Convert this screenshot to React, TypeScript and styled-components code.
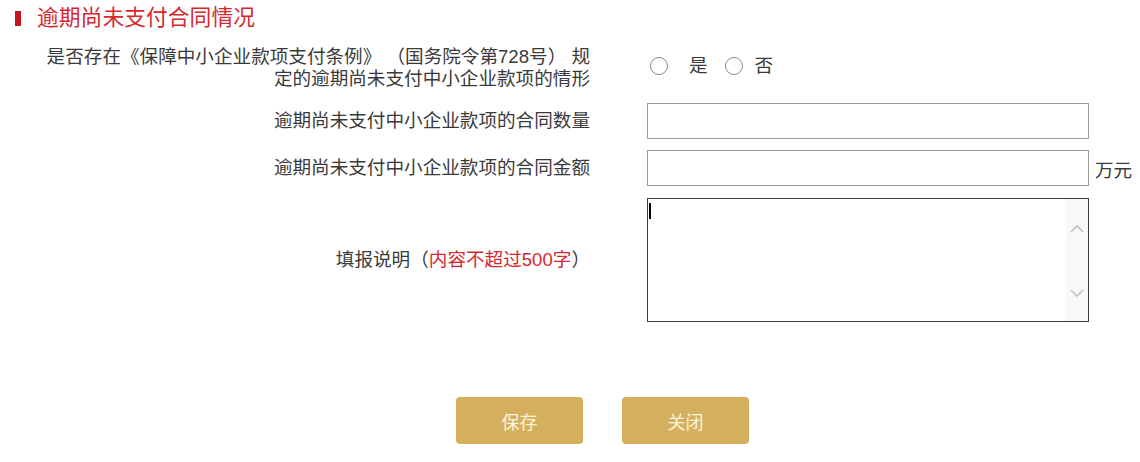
import React from "react";
import styled, { createGlobalStyle } from "styled-components";

const FONT = `"Liberation Sans", "Noto Sans CJK SC", "Microsoft YaHei", sans-serif`;

const Global = createGlobalStyle`
  html, body { margin: 0; padding: 0; background: #fff; }
  body { font-family: ${FONT}; color: #3a3a3a; }
`;

const Page = styled.div`
  width: 1140px;
  height: 462px;
  background: #fff;
  padding-top: 6px;
  box-sizing: border-box;
`;

const TitleRow = styled.div`
  display: flex;
  align-items: center;
  height: 24px;
  padding-left: 15px;
  gap: 16px;
`;

const TitleBar = styled.span`
  width: 6px;
  height: 15px;
  background: #c4161c;
`;

const TitleText = styled.h2`
  margin: 0;
  font-family: ${FONT};
  font-size: 21.8px;
  font-weight: 400;
  line-height: 24px;
  color: #d6282e;
`;

const Form = styled.div`
  display: flex;
  flex-direction: column;
  margin-top: 16px;
`;

const Row = styled.div<{ $top?: number }>`
  display: flex;
  align-items: center;
  margin-top: ${(p) => p.$top ?? 0}px;
`;

const Label = styled.div`
  width: 590px;
  text-align: right;
  font-size: 18.6px;
  line-height: 21.5px;
  color: #3a3a3a;
  flex-shrink: 0;
  white-space: pre;
`;

const Red = styled.span`
  color: #d6282e;
`;

const Control = styled.div`
  margin-left: 57px;
  width: 442px;
  flex-shrink: 0;
`;

const RadioGroup = styled.div`
  display: flex;
  align-items: center;
  padding-left: 3px;
  font-size: 18.6px;
  color: #3a3a3a;
  line-height: 21px;
  margin-top: -4px;
`;

const RadioCircle = styled.span<{ $gap: number }>`
  display: inline-block;
  width: 16px;
  height: 16px;
  border: 1px solid #8a8a8a;
  border-radius: 50%;
  background: #fff;
  margin-right: ${(p) => p.$gap}px;
`;

const RadioText = styled.span<{ $gap: number }>`
  margin-right: ${(p) => p.$gap}px;
`;

const TextInput = styled.div`
  width: 442px;
  height: 36px;
  box-sizing: border-box;
  border: 1px solid #9c9c9c;
  background: #fff;
`;

const Suffix = styled.span`
  margin-left: 6px;
  font-size: 18.6px;
  color: #3a3a3a;
`;

const AreaWrap = styled.div`
  position: relative;
  width: 442px;
  height: 124px;
  box-sizing: border-box;
  border: 1px solid #3c3c3c;
  background: #fff;
`;

const Caret = styled.span`
  position: absolute;
  left: 1px;
  top: 4px;
  width: 2px;
  height: 16px;
  background: #000;
`;

const ScrollBar = styled.div`
  position: absolute;
  right: 0;
  top: 0;
  bottom: 0;
  width: 22px;
  background: #f8f8f8;
  display: flex;
  flex-direction: column;
  justify-content: space-between;
  align-items: center;
  padding: 25px 0 23px;
  box-sizing: border-box;
`;

const ButtonBar = styled.div`
  display: flex;
  gap: 39px;
  padding-left: 456px;
  margin-top: 75px;
`;

const Button = styled.button`
  width: 127px;
  height: 47px;
  border: none;
  border-radius: 4px;
  background: #d4b05e;
  color: #fdf4d8;
  font-family: ${FONT};
  font-size: 18px;
  cursor: pointer;
`;

const Chevron = ({ up }: { up?: boolean }) => (
  <svg width="14" height="9" viewBox="0 0 14 9">
    <path
      d={up ? "M1 8 L7 2 L13 8" : "M1 1 L7 7 L13 1"}
      fill="none"
      stroke="#c4c4c4"
      strokeWidth="1.6"
    />
  </svg>
);

export default function App() {
  return (
    <Page>
      <Global />
      <TitleRow>
        <TitleBar />
        <TitleText>逾期尚未支付合同情况</TitleText>
      </TitleRow>
      <Form>
        <Row>
          <Label>
            {"是否存在《保障中小企业款项支付条例》 （国务院令第728号） 规"}
            <br />
            定的逾期尚未支付中小企业款项的情形
          </Label>
          <Control>
            <RadioGroup>
              <RadioCircle $gap={21} />
              <RadioText $gap={17}>是</RadioText>
              <RadioCircle $gap={12} />
              <RadioText $gap={0}>否</RadioText>
            </RadioGroup>
          </Control>
        </Row>
        <Row $top={14}>
          <Label>逾期尚未支付中小企业款项的合同数量</Label>
          <Control>
            <TextInput />
          </Control>
        </Row>
        <Row $top={11}>
          <Label>逾期尚未支付中小企业款项的合同金额</Label>
          <Control>
            <TextInput />
          </Control>
          <Suffix>万元</Suffix>
        </Row>
        <Row $top={12}>
          <Label>
            填报说明（<Red>内容不超过500字</Red>）
          </Label>
          <Control>
            <AreaWrap>
              <Caret />
              <ScrollBar>
                <Chevron up />
                <Chevron />
              </ScrollBar>
            </AreaWrap>
          </Control>
        </Row>
      </Form>
      <ButtonBar>
        <Button>保存</Button>
        <Button>关闭</Button>
      </ButtonBar>
    </Page>
  );
}
